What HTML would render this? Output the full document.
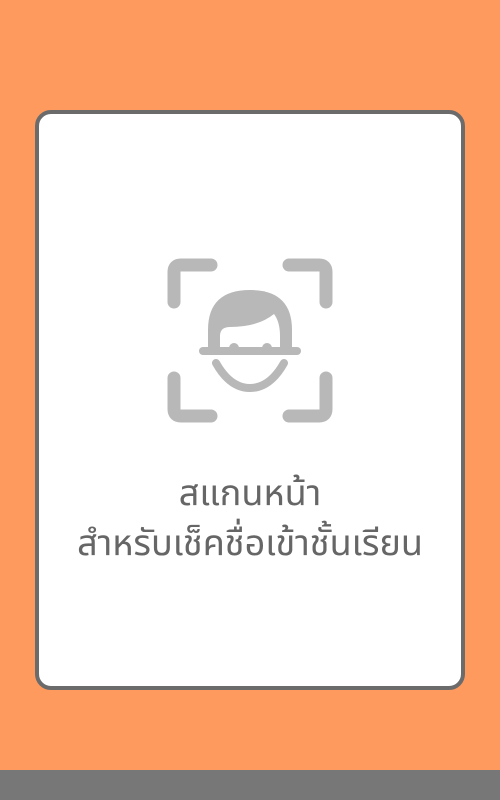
<!DOCTYPE html>
<html><head><meta charset="utf-8"><style>
html,body{margin:0;padding:0;width:500px;height:800px;overflow:hidden;background:#ff9a5e;}
.card{position:absolute;left:35px;top:110px;width:422px;height:572px;border:4px solid #6b6b6b;border-radius:16px;background:#fff;}
.bar{position:absolute;left:0;top:770px;width:500px;height:30px;background:#777;}
.t{position:absolute;left:0;width:500px;text-align:center;color:#666;font-family:"Liberation Sans","Noto Sans Thai","Noto Sans CJK SC",sans-serif;font-size:36px;line-height:50px;white-space:nowrap;}
</style></head><body>
<div class="card"></div>
<svg style="position:absolute;left:0;top:0" width="500" height="800">
<g fill="none" stroke="#b8b8b8" stroke-width="13" stroke-linecap="round" stroke-linejoin="round">
<path d="M174 302 V272 Q174 265 181 265 H211"/>
<path d="M289 265 H319 Q326 265 326 272 V302"/>
<path d="M174 378 V409 Q174 416 181 416 H211"/>
<path d="M289 416 H319 Q326 416 326 409 V378"/>
</g>
<path d="M208 351 V330 Q208 290 250 290 Q292 290 292 330 V351 Z" fill="#b8b8b8"/>
<path d="M220 351 V336 Q220 327 230 327 Q258 327 274 314 Q280 322 280 336 V351 Z" fill="#fff"/>
<circle cx="234" cy="348" r="5" fill="#b8b8b8"/>
<circle cx="267" cy="348" r="5" fill="#b8b8b8"/>
<rect x="199" y="347" width="102" height="8" rx="4" fill="#b8b8b8"/>
<path d="M216 363 Q230 388 250 388 Q270 388 284 363" fill="none" stroke="#b8b8b8" stroke-width="8" stroke-linecap="round"/>
</svg>
<div class="t" style="top:468px">สแกนหน้า</div>
<div class="t" style="top:518px">สำหรับเช็คชื่อเข้าชั้นเรียน</div>
<div class="bar"></div>
</body></html>
